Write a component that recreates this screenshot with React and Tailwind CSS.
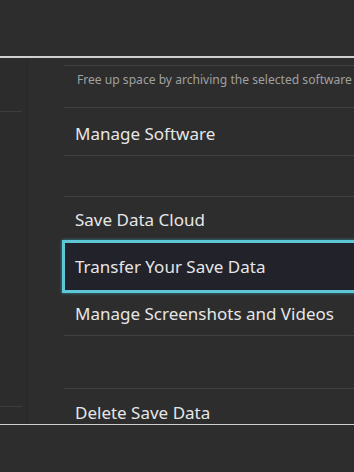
export default function App() {
  const item = "text-[17px] text-[#e6e6e6] leading-none pl-[11px]";
  const sep = "h-px shrink-0 bg-[#414141]";
  return (
    <div className="w-[354px] h-[472px] bg-[#2d2d2d] overflow-hidden flex flex-col" style={{ fontFamily: '"Noto Sans", "Open Sans", sans-serif' }}>
      <div className="h-[56px] shrink-0 bg-[#2d2d2d]" />
      <div className="h-[2px] shrink-0 bg-[#cfcfcf]" />
      <div className="h-[366px] shrink-0 flex overflow-hidden">
        <div className="w-[28px] shrink-0 border-r border-[#282828] bg-[#2c2c2c] flex flex-col">
          <div className="h-[53px] shrink-0" />
          <div className="h-px w-[22px] shrink-0 bg-[#3d3d3d]" />
          <div className="h-[294px] shrink-0" />
          <div className="h-px w-[22px] shrink-0 bg-[#3d3d3d]" />
        </div>
        <div className="w-[36px] shrink-0" />
        <div className="flex-1 flex flex-col min-w-0">
          <div className="h-[7px] shrink-0" />
          <div className={sep} />
          <div className="h-[41px] shrink-0 pt-[7px] pl-[13px] text-[12.1px] text-[#a0a0a0] whitespace-nowrap leading-[14px]">
            Free up space by archiving the selected software
          </div>
          <div className={sep} />
          <div className="h-[47px] shrink-0 pt-[3px] flex items-center whitespace-nowrap">
            <span className={item}>Manage Software</span>
          </div>
          <div className={sep} />
          <div className="h-[40px] shrink-0" />
          <div className={sep} />
          <div className="h-[43px] shrink-0 pt-[2px] flex items-center whitespace-nowrap">
            <span className={item}>Save Data Cloud</span>
          </div>
          <div className="h-[52px] shrink-0 relative flex items-center whitespace-nowrap">
            <div className="absolute top-0 bottom-[-1px] left-[-2px] right-[-4px] border-[3px] border-[#5ec7d6] bg-[#21222a] shadow-[0_0_3px_#3a8f9c]" />
            <span className={item + " relative"}>Transfer Your Save Data</span>
          </div>
          <div className="h-[43px] shrink-0 flex items-center whitespace-nowrap">
            <span className={item}>Manage Screenshots and Videos</span>
          </div>
          <div className={sep} />
          <div className="h-[52px] shrink-0" />
          <div className={sep} />
          <div className="h-[44px] shrink-0 pt-[2px] flex items-center whitespace-nowrap">
            <span className={item}>Delete Save Data</span>
          </div>
        </div>
      </div>
      <div className="h-[1px] shrink-0 bg-[#cfcfcf]" />
      <div className="flex-1 bg-[#2d2d2d]" />
    </div>
  );
}
